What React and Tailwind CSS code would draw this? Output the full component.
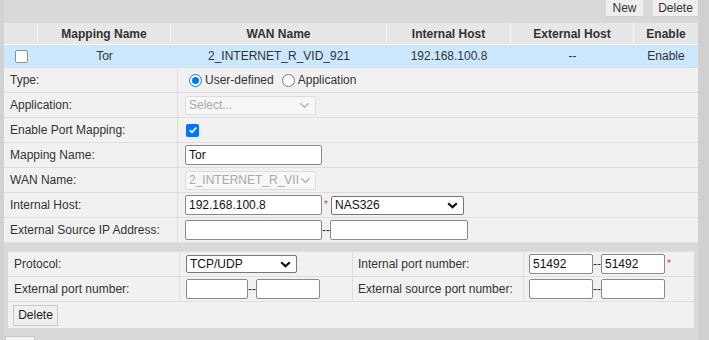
import React from "react";

function Chev({ disabled }) {
  return (
    <svg width="11" height="7" viewBox="0 0 11 7" className="shrink-0">
      <path
        d="M1.2 1.2 L5.5 5.3 L9.8 1.2"
        fill="none"
        stroke={disabled ? "#b5b5b5" : "#111"}
        strokeWidth={disabled ? 1.4 : 2.2}
      />
    </svg>
  );
}

function Label({ children }) {
  return (
    <div className="w-[174px] shrink-0 h-full flex items-center pl-[6px] border-r border-[#dedede]">
      {children}
    </div>
  );
}

function Row({ label, children }) {
  return (
    <div className="flex h-[25px] border-b border-[#dedede] bg-[#f1f1f1]">
      <Label>{label}</Label>
      <div className="flex items-center pl-[7px] h-full">{children}</div>
    </div>
  );
}

function Input({ className, value }) {
  return (
    <div
      className={
        "h-[20px] bg-white border border-[#8a8a8a] rounded-[2px] flex items-center pl-[3px] text-[12px] text-[#111] " +
        className
      }
    >
      {value}
    </div>
  );
}

function Dash() {
  return <span className="w-[8px] text-center text-[#333] leading-none">--</span>;
}

function Star() {
  return <span className="text-[#d04060] text-[10px] self-start mt-[4px] w-[9px] pl-[2px]">*</span>;
}

export default function App() {
  return (
    <div className="w-[709px] h-[340px] overflow-hidden bg-[#d9d9d9] font-['Liberation_Sans',Arial,sans-serif] text-[12px] text-[#333] flex">
      <div className="w-[4px] shrink-0 bg-[#d2d2d2]" />
      <div className="w-[694px] shrink-0">
        {/* top bar */}
        <div className="h-[23px] flex justify-end items-start">
          <div className="h-[17px] w-[37px] bg-[#efefef] border-b border-[#cfcfcf] flex items-center justify-center text-[12px] text-[#333]">
            New
          </div>
          <div className="w-[10px]" />
          <div className="h-[17px] w-[45px] bg-[#efefef] border-b border-[#cfcfcf] flex items-center justify-center text-[12px] text-[#333]">
            Delete
          </div>
        </div>
        {/* header */}
        <div className="flex h-[22px] bg-[#e7e7e7] border-b border-[#f4f4f4] font-bold text-[#333]">
          <div className="w-[34px] border-r border-[#f6f6f6]" />
          <div className="w-[133px] border-r border-[#f6f6f6] flex items-center justify-center">Mapping Name</div>
          <div className="w-[216px] border-r border-[#f6f6f6] flex items-center justify-center">WAN Name</div>
          <div className="w-[124px] border-r border-[#f6f6f6] flex items-center justify-center">Internal Host</div>
          <div className="w-[123px] border-r border-[#f6f6f6] flex items-center justify-center">External Host</div>
          <div className="flex-1 flex items-center justify-center">Enable</div>
        </div>
        {/* data row */}
        <div className="flex h-[23px] bg-[#cce8ff] border-b border-[#dedede] text-[#333]">
          <div className="w-[34px] flex items-center justify-center">
            <div className="w-[13px] h-[13px] bg-white border border-[#8f8f8f] rounded-[2px]" />
          </div>
          <div className="w-[133px] flex items-center justify-center">Tor</div>
          <div className="w-[216px] flex items-center justify-center">2_INTERNET_R_VID_921</div>
          <div className="w-[124px] flex items-center justify-center">192.168.100.8</div>
          <div className="w-[123px] flex items-center justify-center">--</div>
          <div className="flex-1 flex items-center justify-center">Enable</div>
        </div>
        {/* form rows */}
        <Row label="Type:">
          <div className="flex items-center">
            <span className="w-[13px] h-[13px] rounded-full border border-[#0075ff] flex items-center justify-center bg-white ml-[4px] mr-[3px]">
              <span className="w-[7px] h-[7px] rounded-full bg-[#0075ff]" />
            </span>
            <span>User-defined</span>
            <span className="w-[13px] h-[13px] rounded-full border border-[#767676] bg-white ml-[8px] mr-[3px]" />
            <span>Application</span>
          </div>
        </Row>
        <Row label="Application:">
          <div className="h-[19px] w-[131px] border border-[#dcdcdc] bg-[#f7f7f7] rounded-[2px] flex items-center justify-between pl-[3px] pr-[5px] text-[#a9a9a9]">
            <span>Select...</span>
            <Chev disabled />
          </div>
        </Row>
        <Row label="Enable Port Mapping:">
          <div className="w-[13px] h-[13px] rounded-[2px] bg-[#0075ff] flex items-center justify-center ml-[1px]">
            <svg width="10" height="10" viewBox="0 0 10 10">
              <path d="M1.8 5.2 L4 7.3 L8.3 2.5" fill="none" stroke="#fff" strokeWidth="1.8" />
            </svg>
          </div>
        </Row>
        <Row label="Mapping Name:">
          <Input className="w-[137px]" value="Tor" />
        </Row>
        <Row label="WAN Name:">
          <div className="h-[19px] w-[131px] border border-[#dcdcdc] bg-[#f7f7f7] rounded-[2px] flex items-center justify-between pl-[3px] pr-[4px] text-[#a9a9a9] overflow-hidden">
            <span className="whitespace-nowrap">2_INTERNET_R_VII</span>
            <Chev disabled />
          </div>
        </Row>
        <Row label="Internal Host:">
          <Input className="w-[137px]" value="192.168.100.8" />
          <Star />
          <div className="h-[19px] w-[133px] border border-[#767676] bg-white rounded-[2px] flex items-center justify-between pl-[3px] pr-[5px] text-[#111]">
            <span>NAS326</span>
            <Chev />
          </div>
        </Row>
        <Row label="External Source IP Address:">
          <Input className="w-[137px]" value="" />
          <Dash />
          <Input className="w-[138px]" value="" />
        </Row>
        {/* port table */}
        <div className="mt-[8px] mx-[4px]">
          <div className="flex h-[26px] bg-[#f1f1f1] border-b border-[#dedede] border-t border-t-[#dedede]">
            <div className="w-[172px] border-r border-[#dedede] flex items-center pl-[6px]">Protocol:</div>
            <div className="w-[173px] border-r border-[#dedede] flex items-center pl-[6px]">
              <div className="h-[18px] w-[111px] border border-[#767676] bg-white rounded-[2px] flex items-center justify-between pl-[3px] pr-[5px] text-[#111]">
                <span>TCP/UDP</span>
                <Chev />
              </div>
            </div>
            <div className="w-[171px] border-r border-[#dedede] flex items-center pl-[5px]">Internal port number:</div>
            <div className="flex-1 flex items-center pl-[5px]">
              <Input className="w-[64px]" value="51492" />
              <Dash />
              <Input className="w-[64px]" value="51492" />
              <Star />
            </div>
          </div>
          <div className="flex h-[25px] bg-[#f1f1f1] border-b border-[#dedede]">
            <div className="w-[172px] border-r border-[#dedede] flex items-center pl-[6px]">External port number:</div>
            <div className="w-[173px] border-r border-[#dedede] flex items-center pl-[6px]">
              <Input className="w-[62px]" value="" />
              <Dash />
              <Input className="w-[64px]" value="" />
            </div>
            <div className="w-[171px] border-r border-[#dedede] flex items-center pl-[5px]">External source port number:</div>
            <div className="flex-1 flex items-center pl-[5px]">
              <Input className="w-[64px]" value="" />
              <Dash />
              <Input className="w-[64px]" value="" />
            </div>
          </div>
          <div className="flex h-[26px] bg-[#f1f1f1] items-center pl-[5px]">
            <div className="h-[21px] w-[45px] bg-[#efefef] border border-[#c8c8c8] flex items-center justify-center text-[#222]">
              Delete
            </div>
          </div>
        </div>
        <div className="mt-[8px] ml-[1px] h-[20px] w-[30px] bg-[#f4f4f4] border border-[#c8c8c8] flex items-start justify-center pt-[1px] text-[#222]">
          Add
        </div>
      </div>
      <div className="flex-1 bg-[#d0d0d0]" />
    </div>
  );
}
